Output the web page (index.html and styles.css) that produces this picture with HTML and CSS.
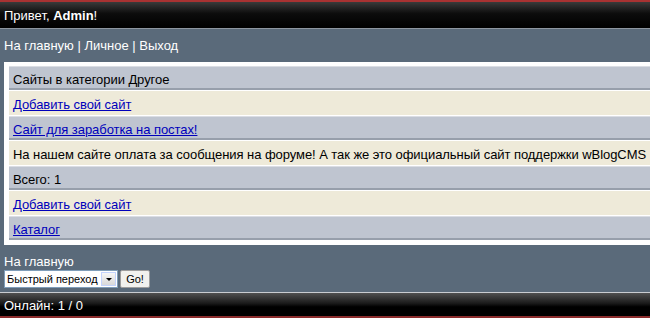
FILE: index.html
```html
<!DOCTYPE html>
<html lang="ru">

<head>
    <meta charset="UTF-8">
    <title>Каталог сайтов</title>
    <link rel="stylesheet" href="styles.css">
</head>

<body>
<div class="top">Привет, <b>Admin</b>!</div>

<div class="nav">
    <a href="#">На главную</a> | <a href="#">Личное</a> | <a href="#">Выход</a>
</div>

<div class="box">
    <div class="row row-title">Сайты в категории Другое</div>
    <div class="row row-light"><a href="#">Добавить свой сайт</a></div>
    <div class="row row-title"><a href="#">Сайт для заработка на постах!</a></div>
    <div class="row row-light">На нашем сайте оплата за сообщения на форуме! А так же это официальный сайт поддержки wBlogCMS</div>
    <div class="row row-title">Всего: 1</div>
    <div class="row row-light"><a href="#">Добавить свой сайт</a></div>
    <div class="row row-title"><a href="#">Каталог</a></div>
</div>

<div class="bottom">
    <a href="#" class="home-link">На главную</a>
    <form class="jump-form">
        <div class="jump">
            <select name="jump">
                <option>Быстрый переход</option>
                <option>Форум</option>
                <option>Каталог</option>
            </select>
            <span class="jump-arrow"></span>
        </div>
        <button type="submit">Go!</button>
    </form>
</div>

<div class="footer">Онлайн: 1 / 0</div>
</body>

</html>
```

FILE: styles.css
```css
* {
    box-sizing: border-box;
}

html,
body {
    overflow: hidden;
}

body {
    margin: 0;
    padding: 0;
    background-color: #5a6a7a;
    font-family: 'Liberation Sans', Arial, sans-serif;
    font-size: 13px;
    color: #000;
}

a {
    color: #0000bb;
}

/* header bar */
.top {
    height: 29px;
    padding: 2px 4px 0;
    line-height: 23px;
    color: #fff;
    border-top: 2px solid #a83232;
    border-bottom: 1px solid #8d96a0;
    background: linear-gradient(to bottom, #3a3a3a 0%, #0c0c0c 45%, #000 100%);
}

.nav {
    padding: 9px 4px 8px;
    line-height: 16px;
    color: #fff;
}

.nav a {
    color: #fff;
    text-decoration: none;
}

/* main box */
.box {
    margin: 0 -30px 0 4px;
    padding: 4px 5px 5px;
    background-color: #fff;
}

.row {
    padding: 5px 4px 0;
    line-height: 16px;
    letter-spacing: -0.06px;
    white-space: nowrap;
    border-top: 1px solid;
    border-bottom: 2px solid;
    margin-bottom: 1px;
}

.row:last-child {
    margin-bottom: 0;
}

.row-title {
    background-color: #bfc5d0;
    border-top-color: #dadde3;
    border-bottom-color: #979fab;
}

.row-light {
    background-color: #eeead9;
    border-top-color: #eeead9;
    border-bottom-color: #eeead9;
}

/* quick jump */
.bottom {
    padding: 9px 4px 4px;
}

.home-link {
    display: block;
    line-height: 16px;
    color: #fff;
    text-decoration: none;
}

.jump-form {
    display: flex;
    gap: 2px;
    margin: 0;
}

.jump {
    display: flex;
    width: 114px;
    height: 18px;
    border: 1px solid #7f9db9;
    background-color: #fff;
}

.jump select {
    flex: 1;
    min-width: 0;
    padding: 0 0 0 2px;
    border: none;
    outline: none;
    appearance: none;
    -webkit-appearance: none;
    background: #fff;
    font-family: 'Liberation Sans', Arial, sans-serif;
    font-size: 11px;
    color: #000;
}

.jump-arrow {
    width: 15px;
    margin: 1px;
    border: 1px solid #c3d3fd;
    background: linear-gradient(to bottom, #f6f6f6, #d8d8d8);
    display: flex;
    align-items: center;
    justify-content: center;
}

.jump-arrow::after {
    content: '';
    border-left: 3px solid transparent;
    border-right: 3px solid transparent;
    border-top: 3px solid #000;
}

.jump-form button {
    width: 30px;
    height: 18px;
    padding: 0;
    font-family: 'Liberation Sans', Arial, sans-serif;
    font-size: 11px;
    color: #000;
    background-color: #f1f1ee;
    border: 1px solid #9d9d9d;
    border-radius: 2px;
}

/* footer bar */
.footer {
    height: 26px;
    padding: 3px 4px 0;
    line-height: 20px;
    color: #fff;
    border-top: 1px solid #c9ccd0;
    border-bottom: 2px solid #8b2c2c;
    background: linear-gradient(to bottom, #505050 0%, #1a1a1a 45%, #000 60%, #000 100%);
}
```
